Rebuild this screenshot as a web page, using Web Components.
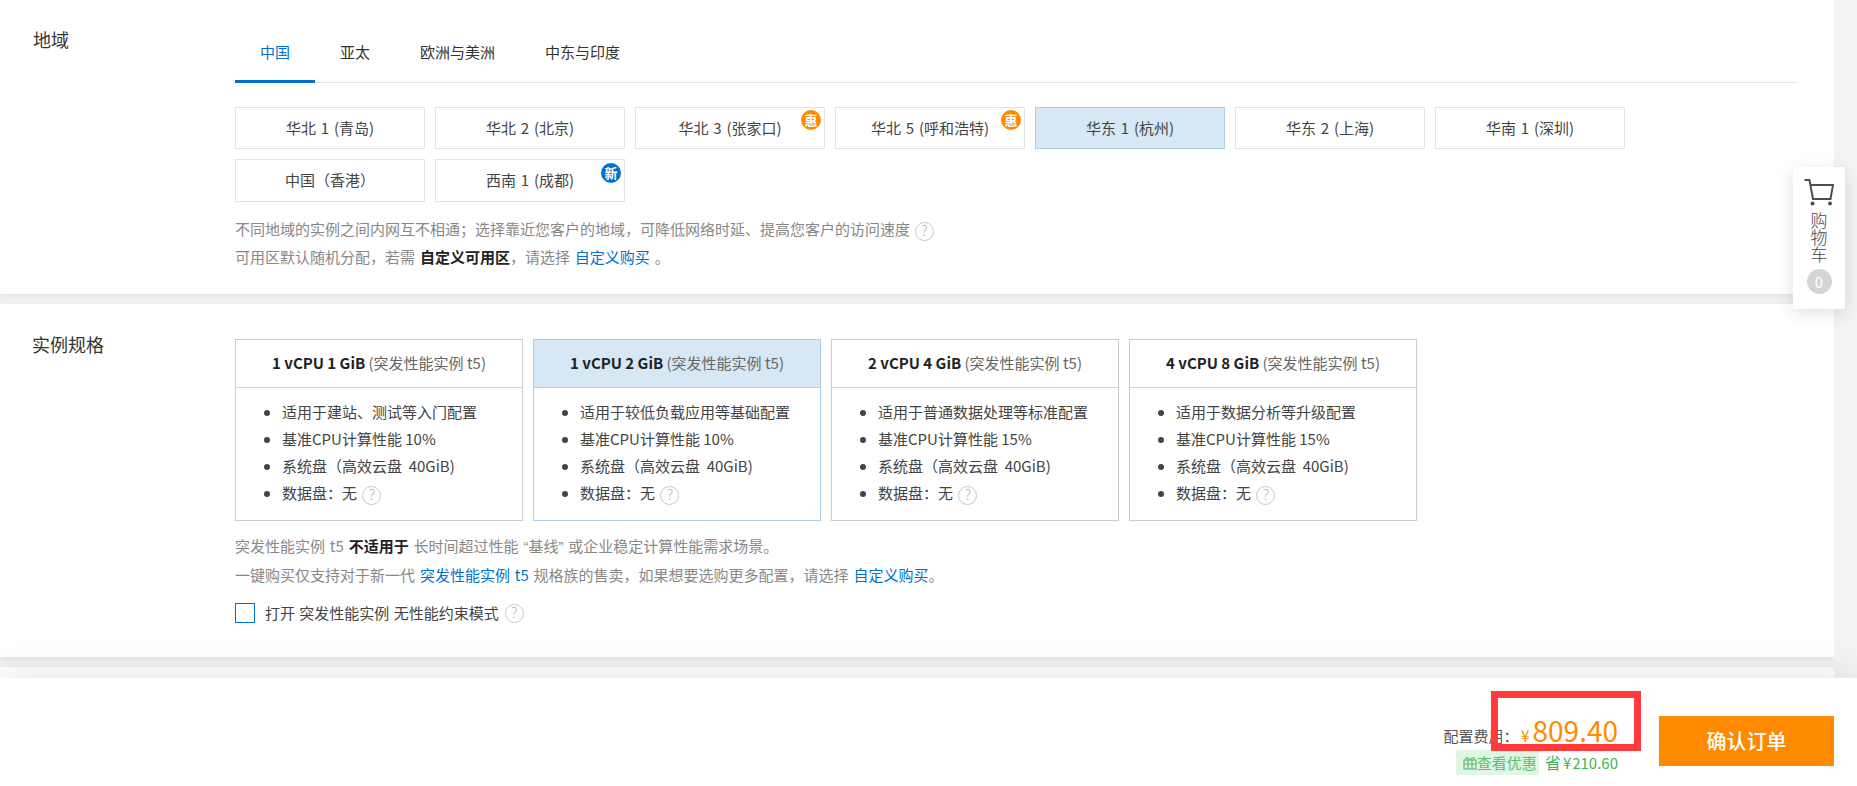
<!DOCTYPE html>
<html lang="zh-CN"><head><meta charset="utf-8"><title>配置</title>
<style>
html,body{margin:0;padding:0;height:100%;overflow:hidden;background:#f3f3f3;}
body{font:15px/28px "Noto Sans CJK SC","Noto Sans",sans-serif;color:#333;}
.q{font-family:"Liberation Sans",sans-serif}
</style></head><body>
<x-app>
  <x-section label="地域" pad="0 37px 23px 0" labelleft="33px">
    <x-tabs></x-tabs>
    <x-regions>
      <x-region>华北 1 (青岛)</x-region>
      <x-region>华北 2 (北京)</x-region>
      <x-region badge="惠">华北 3 (张家口)</x-region>
      <x-region badge="惠">华北 5 (呼和浩特)</x-region>
      <x-region selected>华东 1 (杭州)</x-region>
      <x-region>华东 2 (上海)</x-region>
      <x-region>华南 1 (深圳)</x-region>
      <x-region tall>中国（香港）</x-region>
      <x-region tall badge="新" kind="new">西南 1 (成都)</x-region>
    </x-regions>
    <x-note style="margin-top:13px">不同地域的实例之间内网互不相通；选择靠近您客户的地域，可降低网络时延、提高您客户的访问速度 <x-help></x-help></x-note>
    <x-note>可用区默认随机分配，若需 <b>自定义可用区</b>，请选择 <a>自定义购买</a> 。</x-note>
  </x-section>
  <x-section label="实例规格" pad="35px 37px 34px 0" labeltop="27px" labelleft="32px" style="margin-top:10px">
    <x-specs>
      <x-spec title="1 vCPU 1 GiB" a="适用于建站、测试等入门配置" b="基准CPU计算性能 10%"></x-spec>
      <x-spec selected title="1 vCPU 2 GiB" a="适用于较低负载应用等基础配置" b="基准CPU计算性能 10%"></x-spec>
      <x-spec title="2 vCPU 4 GiB" a="适用于普通数据处理等标准配置" b="基准CPU计算性能 15%"></x-spec>
      <x-spec title="4 vCPU 8 GiB" a="适用于数据分析等升级配置" b="基准CPU计算性能 15%"></x-spec>
    </x-specs>
    <x-note style="margin-top:11px">突发性能实例 t5 <b>不适用于</b> 长时间超过性能 <span class="q">“</span>基线<span class="q">”</span> 或企业稳定计算性能需求场景。</x-note>
    <x-note>一键购买仅支持对于新一代 <a>突发性能实例 t5</a> 规格族的售卖，如果想要选购更多配置，请选择 <a>自定义购买</a>。</x-note>
    <x-check>打开 突发性能实例 无性能约束模式</x-check>
  </x-section>
  <x-section label="" pad="0" style="margin-top:10px;height:60px"></x-section>
  <x-cart slot="overlay"></x-cart>
  <x-footer slot="footer"></x-footer>
</x-app>
<script>
function def(name, css, html){
  customElements.define(name, class extends HTMLElement{
    constructor(){super();this.attachShadow({mode:'open'});}
    connectedCallback(){
      const m = typeof html==='function'?html(this):html;
      this.shadowRoot.innerHTML='<style>'+css+'</style>'+m;
    }
  });
}
const helpIcon='<x-help></x-help>';
def('x-app',`:host{display:flex;flex-direction:column;height:786px;position:relative;overflow:hidden}
 main{flex:1;min-height:0;overflow:hidden;width:1834px}`,
 `<main><slot></slot></main><slot name="overlay"></slot><slot name="footer"></slot>`);
def('x-section',`:host{display:grid;grid-template-columns:235px 1fr;background:#fff;box-shadow:0 2px 8px rgba(0,0,0,.07)}
 .l{font-size:18px;line-height:26px;color:#333;box-sizing:border-box}`,
 h=>`<div class="l" style="padding-top:${h.getAttribute('labeltop')||'26px'};padding-left:${h.getAttribute('labelleft')||'33px'}">${h.getAttribute('label')}</div><div style="padding:${h.getAttribute('pad')};min-width:0"><slot></slot></div>`);
def('x-tabs',`:host{display:flex;height:83px;box-sizing:border-box;border-bottom:1px solid #e5e5e5;margin-bottom:24px}
 span{padding:0 25px;height:83px;line-height:104px;box-sizing:border-box;color:#333;cursor:pointer}
 .on{color:#0070cc;border-bottom:3px solid #0070cc}`,
 `<span class="on">中国</span><span>亚太</span><span>欧洲与美洲</span><span>中东与印度</span>`);
def('x-regions',`:host{display:flex;flex-wrap:wrap;gap:10px;width:1400px}`,`<slot></slot>`);
def('x-region',`:host{display:block;position:relative;width:190px;height:42px;box-sizing:border-box;border:1px solid #e3e3e3;background:#fff;text-align:center;line-height:40px;color:#444;word-spacing:1.5px}
 :host([tall]){height:43px}
 :host([selected]){background:#d6e8f5;border-color:#a9cfe9}
 i{position:absolute;top:2px;right:3px;width:20px;height:20px;border-radius:50%;background:#ff8a00;color:#fff;font:bold 13px/20px "Noto Sans CJK SC",sans-serif;text-align:center}
 i.new{background:#0070cc;top:3px}`,
 h=>`<slot></slot>`+(h.hasAttribute('badge')?`<i class="${h.getAttribute('kind')||''}">${h.getAttribute('badge')}</i>`:''));
def('x-note',`:host{display:block;line-height:28px;color:#888;white-space:nowrap;word-spacing:1.500px}
 ::slotted(b){color:#222;font-weight:700}
 ::slotted(a){color:#0070cc}`,`<slot></slot>`);
def('x-help',`:host{display:inline-block;box-sizing:border-box;width:19px;height:19px;border:1.5px solid #c9c9c9;border-radius:50%;color:#b0b0b0;font:300 14px/16px "Noto Sans",sans-serif;text-align:center;vertical-align:-1px;word-spacing:0}`,`?`);
def('x-specs',`:host{display:flex;gap:10px}`,`<slot></slot>`);
def('x-spec',`:host{display:block;box-sizing:border-box;width:288px;height:182px;border:1px solid #ccc;background:#fff;color:#444}
 :host([selected]){border-color:#a9d0f0}
 header{height:47px;line-height:46px;text-align:center;border-bottom:1px solid #d4d4d4;color:#666;white-space:nowrap}
 :host([selected]) header{background:#d6e8f5;border-bottom-color:#a9d0f0}
 b{color:#222;font-weight:700}
 ul{margin:0;padding:10px 0 0 46px;list-style:disc}
 li{line-height:27px;white-space:nowrap}
 li::marker{color:#444}
 x-help{margin-left:2px}`,
 h=>`<header><b>${h.getAttribute('title')}</b> (突发性能实例 t5)</header><ul><li>${h.getAttribute('a')}</li><li>${h.getAttribute('b')}</li><li>系统盘（高效云盘 &nbsp;40GiB)</li><li>数据盘：无 ${helpIcon}</li></ul>`);
def('x-check',`:host{display:flex;align-items:center;height:20px;margin-top:14px;color:#444;white-space:nowrap;word-spacing:1px}
 i{width:20px;height:20px;box-sizing:border-box;border:1.5px solid #0070cc;margin-right:10px}
 x-help{margin-left:6px}`,`<i></i><slot></slot><x-help></x-help>`);
def('x-cart',`:host{position:absolute;left:1793px;top:167px;width:52px;height:142px;background:#fff;box-shadow:0 4px 16px rgba(0,0,0,.12);display:flex;flex-direction:column;align-items:center;z-index:2}
 svg{margin-top:12px;display:block}
 .t{margin-top:5px;font-size:17px;line-height:17px;width:17px;color:#444;font-weight:300;text-align:center}
 .n{margin-top:7px;width:25px;height:25px;border-radius:50%;background:#d4d4d4;color:#fff;text-align:center;font-size:15px;line-height:25px}`,
 `<svg width="30" height="27" viewBox="0 0 30 27" fill="none"><path d="M0.5 1H5.5L9 20H26.5L29 6H6.5" stroke="#4a4f55" stroke-width="2"/><circle cx="8.500" cy="24.500" r="2" fill="#4a4f55"/><circle cx="26" cy="24.500" r="2" fill="#4a4f55"/></svg><div class="t">购物车</div><div class="n">0</div>`);
def('x-footer',`:host{display:flex;justify-content:flex-end;height:108px;background:#fff;position:relative;z-index:1;box-shadow:0 -6px 36px rgba(0,0,0,.09);padding-right:23px;box-sizing:border-box;flex:none}
 .g{display:flex;flex-direction:column;align-items:flex-end;margin-top:32px;margin-right:41px;position:relative}
 .p{height:40px;display:flex;align-items:baseline;white-space:nowrap;line-height:40px;color:#555}
 .y{color:#ff8a00;font-size:16px;margin:0 3px 0 2px}
 .v{color:#ff8a00;font-size:28px}
 .s{display:flex;align-items:center;height:25px;color:#3fb655;font-size:15px;white-space:nowrap}
 .pill{display:flex;align-items:center;height:25px;padding:0 2px 0 7px;background:#e0f5e3;border-radius:2px;color:#5cbf6c;margin-right:6px}
 .pill svg{margin-right:0}
 .save{font-size:15px}
 .save em{font-style:normal;font-size:16px;margin-right:2px}
 .save u{text-decoration:none;margin-right:1px}
 button{all:unset;display:block;width:175px;height:50px;margin-top:38px;background:#ff8a00;color:#fff;font-size:20px;font-weight:500;line-height:50px;text-align:center;font-family:inherit}
 .red{position:absolute;left:1491px;top:13px;width:150px;height:60px;box-sizing:border-box;border:7px solid #ff3b3b;pointer-events:none}`,
 `<div class="g"><div class="p"><span>配置费用：</span><span class="y">¥</span><span class="v">809.40</span></div>
 <div class="s"><span class="pill"><svg width="14" height="14" viewBox="0 0 14 14" fill="none" stroke="#5cbf6c" stroke-width="1.200"><rect x="1" y="4" width="12" height="9"/><path d="M1 8H13M5 4V13M9 4V13M7 4C5 1 2.500 1 3 3.500M7 4C9 1 11.500 1 11 3.500"/></svg>查看优惠</span><span class="save"><em>省</em><u>¥</u>210.60</span></div></div>
 <button>确认订单</button><div class="red"></div>`);
</script>
</body></html>
